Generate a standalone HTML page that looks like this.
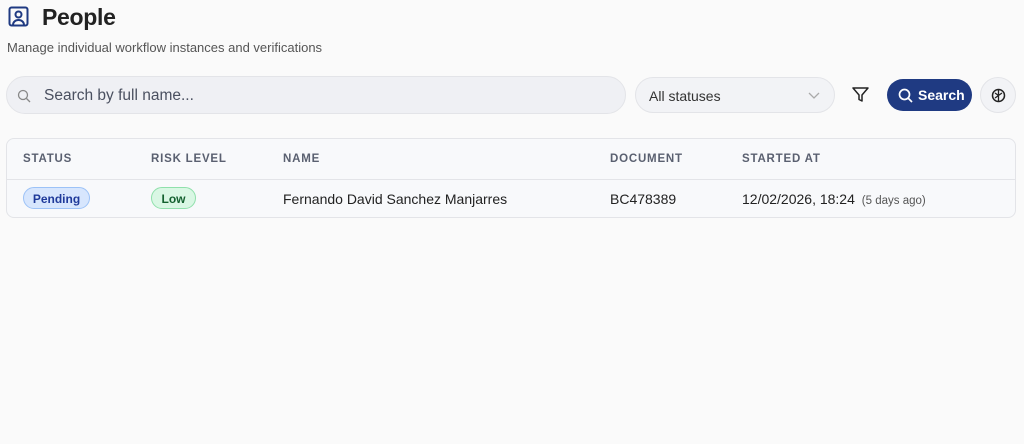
<!DOCTYPE html>
<html><head><style>
*{box-sizing:border-box;margin:0;padding:0}
body{width:1024px;height:444px;background:#fafafa;font-family:"Liberation Sans",sans-serif;color:#222;position:relative;overflow:hidden}
.abs{position:absolute}
h1{position:absolute;left:42px;top:4px;font-size:23px;font-weight:bold;color:#222;letter-spacing:-0.3px}
.sub{left:7px;top:40px;font-size:13px;color:#555}
.search{left:6px;top:76px;width:620px;height:38px;border:1px solid #e3e4e8;border-radius:19px;background:#eff0f4}
.search span{position:absolute;left:37px;top:10px;font-size:15.5px;color:#4a5060}
.sel{left:635px;top:77px;width:200px;height:36px;border:1px solid #e3e4e8;border-radius:18px;background:#f2f3f6}
.sel span{position:absolute;left:13px;top:10px;font-size:14px;color:#333}
.btn{left:887px;top:79px;width:85px;height:32px;border-radius:16px;background:#1f3a82;color:#fff;font-weight:bold;font-size:14px}
.btn span{position:absolute;left:31px;top:8px}
.circ{left:980px;top:77px;width:36px;height:36px;border-radius:18px;border:1px solid #e3e4e8;background:#f2f3f6}
.tbl{left:6px;top:138px;width:1010px;height:80px;border:1px solid #e3e4e8;border-radius:8px;background:#f8f9fb}
.hd{position:absolute;top:14px;font-size:11.5px;font-weight:bold;color:#5a6070;letter-spacing:0.8px}
.line{position:absolute;left:0;right:0;top:40px;height:1px;background:#e3e4e8}
.cell{position:absolute;top:52px;font-size:14px;color:#222}
.pill{position:absolute;top:48px;height:22px;border-radius:11px;font-size:12px;font-weight:bold;padding:4px 0;text-align:center}
</style></head><body>
<svg class="abs" style="left:8px;top:6px" width="21" height="21" viewBox="0 0 21 21"><rect x="1.5" y="1.5" width="18" height="18" rx="2" fill="none" stroke="#1f3a82" stroke-width="2"/><circle cx="10.5" cy="8.5" r="3" fill="none" stroke="#1f3a82" stroke-width="2"/><path d="M5 19c0-3 2.5-5 5.5-5s5.5 2 5.5 5" fill="none" stroke="#1f3a82" stroke-width="2"/></svg>
<h1>People</h1>
<div class="abs sub">Manage individual workflow instances and verifications</div>
<div class="abs search"><svg class="abs" style="left:10px;top:12px" width="14" height="14" viewBox="0 0 14 14"><circle cx="6" cy="6" r="4.5" fill="none" stroke="#888" stroke-width="1.3"/><path d="M9.5 9.5L13 13" stroke="#888" stroke-width="1.3"/></svg><span>Search by full name...</span></div>
<div class="abs sel"><span>All statuses</span><svg class="abs" style="left:172px;top:14px" width="12" height="8" viewBox="0 0 12 8"><path d="M1 1l5 5 5-5" fill="none" stroke="#aaa" stroke-width="1.3"/></svg></div>
<svg class="abs" style="left:852px;top:87px" width="17" height="16" viewBox="0 0 17 16"><path d="M1 1h15l-6 7v6l-3-1.5V8z" fill="none" stroke="#222" stroke-width="1.5" stroke-linejoin="round"/></svg>
<div class="abs btn"><svg class="abs" style="left:11px;top:9px" width="15" height="15" viewBox="0 0 15 15"><circle cx="6.5" cy="6.5" r="5" fill="none" stroke="#fff" stroke-width="1.7"/><path d="M10 10l4 4" stroke="#fff" stroke-width="1.7"/></svg><span>Search</span></div>
<div class="abs circ"><svg class="abs" style="left:10px;top:10px" width="15" height="15" viewBox="0 0 15 15"><circle cx="7.5" cy="7.5" r="6" fill="none" stroke="#222" stroke-width="1.5"/><path d="M7.5 1.5v12M4 5l3.5 2.5L11 5M4 10l3.5-2.5" fill="none" stroke="#222" stroke-width="1.3"/></svg></div>
<div class="abs tbl">
<div class="hd" style="left:16px">STATUS</div>
<div class="hd" style="left:144px">RISK LEVEL</div>
<div class="hd" style="left:276px">NAME</div>
<div class="hd" style="left:603px">DOCUMENT</div>
<div class="hd" style="left:735px">STARTED AT</div>
<div class="line"></div>
<div class="pill" style="left:16px;width:67px;background:#d7e6fd;border:1px solid #9cc2f7;color:#1f3a9a">Pending</div>
<div class="pill" style="left:144px;width:45px;background:#d9f7e4;border:1px solid #8fe0ab;color:#14602f">Low</div>
<div class="cell" style="left:276px">Fernando David Sanchez Manjarres</div>
<div class="cell" style="left:603px">BC478389</div>
<div class="cell" style="left:735px">12/02/2026, 18:24 <span style="font-size:11.5px;color:#555;margin-left:3px">(5 days ago)</span></div>
</div>
</body></html>
